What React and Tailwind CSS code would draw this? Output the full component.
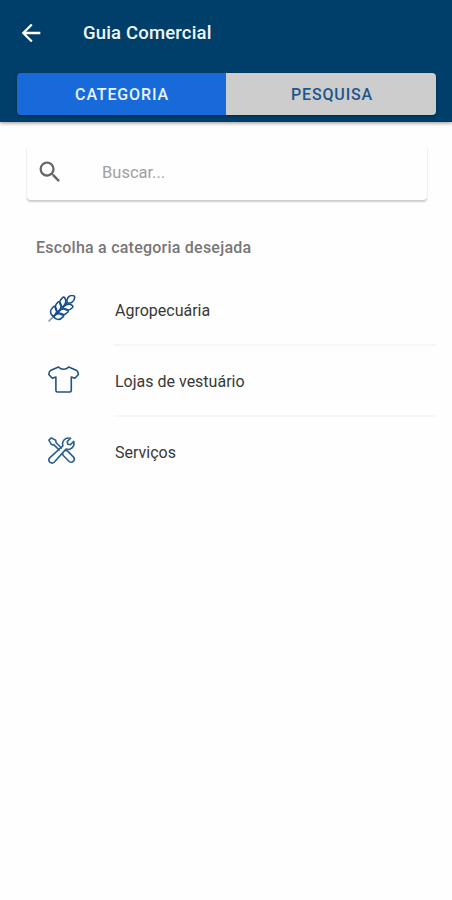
const ink = "#1d5486";

function BackArrow() {
  return (
    <svg className="block h-[28px] w-[28px]" viewBox="0 0 24 24" fill="#fff">
      <path d="M20 11H7.83l5.59-5.59L12 4l-8 8 8 8 1.41-1.41L7.83 13H20v-2z" />
    </svg>
  );
}

function SearchIcon() {
  return (
    <svg className="block h-[28px] w-[28px]" viewBox="0 0 24 24" fill="#666">
      <path d="M15.5 14h-.79l-.28-.27A6.471 6.471 0 0 0 16 9.5 6.5 6.5 0 1 0 9.5 16c1.61 0 3.09-.59 4.23-1.57l.27.28v.79l5 4.99L20.49 19l-4.99-5zm-6 0C7.01 14 5 11.99 5 9.5S7.01 5 9.5 5 14 7.01 14 9.5 11.99 14 9.5 14z" />
    </svg>
  );
}

function WheatIcon() {
  const pairs = [-4.5, 2, 8.5];
  return (
    <svg className="block h-[28px] w-[32px]" viewBox="0 0 32 28" fill="none" stroke="#17508a" strokeWidth="1.6" strokeLinejoin="round" strokeLinecap="round">
      <path d="M1 26L6 21" stroke="#7b98b4" />
      <g transform="translate(14 13) rotate(45)">
        <path d="M0 12V-7" />
        <path d="M0-7.500C-3.800-9.500-4-13.500-1.500-16.500Q0-17.500 1.500-16.500C4-13.500 3.800-9.500 0-7.500Z" />
        {pairs.map((y) => (
          <g key={y} transform={`translate(0 ${y})`}>
            <path d="M0 3.500C-4.500 4.500-7.300 2-7-3.300Q-6.800-4.800-5.300-4.600C-2-4 0-1.500 0 3.500Z" />
            <path d="M0 3.500C4.500 4.500 7.300 2 7-3.300Q6.800-4.800 5.300-4.600C2-4 0-1.500 0 3.500Z" />
          </g>
        ))}
      </g>
    </svg>
  );
}

function ShirtIcon() {
  return (
    <svg className="block h-[28px] w-[32px]" viewBox="0 0 32 28" fill="none" stroke={ink} strokeWidth="1.6" strokeLinejoin="round" strokeLinecap="round">
      <path d="M10.500 1L3 4.200Q1.800 4.700 1.400 6L.8 8.500L4.300 12.300L7.900 11V24.500Q7.900 26 9.400 26H21.800Q23.300 26 23.300 24.500V11L26.900 12.300L30.400 8.500L29.800 6Q29.400 4.700 28.200 4.200L20.700 1Q18.800 3.300 15.600 3.300T10.500 1Z" />
    </svg>
  );
}

function ToolsIcon() {
  return (
    <svg className="block h-[28px] w-[32px]" viewBox="0 0 32 28" fill="none" stroke="#2a5f8e" strokeWidth="1.6" strokeLinejoin="round" strokeLinecap="round">
      <path d="M11.200 13L6 7.900L3.300 7.400L.9 3.200L3.300 .9L7.600 3.200L8.200 5.800L13.400 11" />
      <path d="M17.500 13.600Q18.800 13.400 19.900 14.400L25.600 20.100Q27.300 22 25.500 24.200Q23.300 26.200 21.200 24.500L15.500 18.800Q14.500 17.700 14.600 16.500" />
      <path d="M22.600 1.300Q18.500 .2 16 3Q13.900 5.600 14.900 8.900L1.900 20.600Q-.2 22.900 1.800 25.200Q4.200 27.100 6.400 25L18 12.100Q21.700 13.200 24.300 10.700Q26.900 8.100 25.700 4.400L22.400 7.700L19.800 7.200L19.200 4.600Z" />
    </svg>
  );
}

const categories = [
  { name: "Agropecuária", Icon: WheatIcon },
  { name: "Lojas de vestuário", Icon: ShirtIcon },
  { name: "Serviços", Icon: ToolsIcon },
];

export default function App() {
  return (
    <div className="h-[900px] w-full overflow-hidden bg-[#fefefe] font-['Roboto',sans-serif]">
      <header className="h-[122px] bg-[#003f69] shadow-[0_1px_4px_rgba(0,0,0,0.45)]">
        <div className="flex h-[73px] items-center pb-[7px] pl-[17px]">
          <BackArrow />
          <h1 className="ml-[38px] text-[18.500px] leading-6 font-medium tracking-[0.17px] whitespace-nowrap text-[#f1f6fa]">Guia Comercial</h1>
        </div>
        <div className="mr-[16px] ml-[17px] flex h-[42px] overflow-hidden rounded-[4px] text-[16px] font-medium tracking-[0.85px] shadow-[0_1px_3px_rgba(0,0,0,0.4)]">
          <button className="w-[209px] bg-[#186adb] pt-px pl-px text-[#e9f3ff]">CATEGORIA</button>
          <button className="flex-1 bg-[#cdcdcd] pt-px pl-[2px] text-[#1d568c]">PESQUISA</button>
        </div>
      </header>
      <main>
        <div className="mt-[22px] mr-[25px] ml-[27px] flex h-[56px] items-center rounded-[4px] bg-[#fefefe] pl-[9px] shadow-[0_2px_2px_rgba(0,0,0,0.2),0_0_1px_rgba(0,0,0,0.06)]">
          <SearchIcon />
          <span className="mt-px ml-[38px] text-[16.500px] leading-6 text-[#a0a0a0]">Buscar...</span>
        </div>
        <h2 className="mt-[36px] ml-[36px] text-[16px] leading-6 font-medium tracking-[0.23px] whitespace-nowrap text-[#777]">Escolha a categoria desejada</h2>
        <ul className="mt-[15px]">
          {categories.map(({ name, Icon }) => (
            <li key={name} className="group flex h-[71px] pl-[48px]">
              <div className="pt-[20px]">
                <Icon />
              </div>
              <div className="mr-[16px] ml-[34px] flex-1 border-b-2 border-[#f6f6f6] pt-[24px] pl-px text-[16px] leading-6 text-[#383838] group-last:border-0">
                {name}
              </div>
            </li>
          ))}
        </ul>
      </main>
    </div>
  );
}
